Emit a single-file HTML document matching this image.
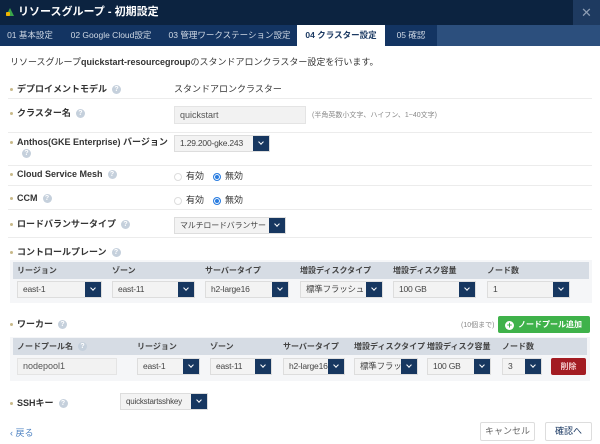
<!DOCTYPE html><html><head><meta charset="utf-8"><style>
*{box-sizing:border-box;margin:0;padding:0}
body{width:600px;height:444px;background:#fff;font-family:"Liberation Sans","Noto Sans CJK JP",sans-serif;font-size:9px;color:#333;position:relative;overflow:hidden}
.a{position:absolute;white-space:nowrap}
.title{left:0;top:0;width:600px;height:25px;background:#0c2340}
.tabs{left:0;top:25px;width:600px;height:21px;background:#2c4f7d}
.tab{position:absolute;top:0;height:21px;line-height:21px;color:#cfd8e4;font-size:8.5px;background:#133462;text-align:center}
.lbl{font-weight:bold;font-size:9px;color:#333}
.lbl:before{content:"";display:inline-block;width:3px;height:3px;border-radius:50%;background:#c8b98a;margin-right:4px;vertical-align:middle}
.q{display:inline-block;width:9px;height:9px;border-radius:50%;background:#c5d0dc;color:#fff;font-size:7px;line-height:9px;text-align:center;font-weight:bold;vertical-align:middle;margin-left:5px}
.sep{left:8px;width:584px;height:1px;background:#ececec}
.sel{position:absolute;height:17px;background:#f3f3f3;border:1px solid #ddd;line-height:15px;padding-left:5px;font-size:8.5px;color:#444;overflow:hidden;letter-spacing:-0.2px}
.sel i{position:absolute;right:-1px;top:-1px;width:17px;height:17px;background:#173760}
.sel i:after{content:"";position:absolute;left:6px;top:5px;width:3px;height:3px;border-right:1px solid #fff;border-bottom:1px solid #fff;transform:rotate(45deg)}
.box{background:#f5f6f8}
.hd{background:#d6dce4;height:17px}
.th{position:absolute;font-weight:bold;font-size:8px;color:#444;top:0;line-height:17px}
.btn{position:absolute;border:1px solid #ddd;background:#fff;text-align:center;color:#666;font-size:9px;line-height:17px;border-radius:2px}
.radio{display:inline-block;width:8px;height:8px;border-radius:50%;border:1px solid #ddd;vertical-align:middle;margin-right:4px}
.on{background:#2b7de0;border-color:#2b7de0;box-shadow:inset 0 0 0 1px #fff}
</style></head><body>
<div class="a title"></div>
<div class="a" style="left:6px;top:8px;width:0;height:0;border-left:4px solid transparent;border-right:4px solid transparent;border-bottom:8px solid #3aa64a"></div>
<div class="a" style="left:6px;top:12px;width:4px;height:4px;background:#f0b400;border-radius:1px"></div>
<div class="a" style="left:18px;top:5px;color:#fff;font-size:11px;font-weight:bold;line-height:14px">リソースグループ - 初期設定</div>
<div class="a" style="left:573px;top:0;width:27px;height:25px;background:#1e3a60;color:#8d9db3;font-size:13px;text-align:center;line-height:25px">✕</div>
<div class="a tabs"></div>
<div class="a" style="left:0;top:25px;width:437px;height:21px">
<div class="tab" style="left:0;width:60px">01 基本設定</div>
<div class="tab" style="left:60px;width:102px">02 Google Cloud設定</div>
<div class="tab" style="left:162px;width:135px">03 管理ワークステーション設定</div>
<div class="tab" style="left:297px;width:88px;background:#fff;color:#1c3a63;font-weight:bold">04 クラスター設定</div>
<div class="tab" style="left:385px;width:52px">05 確認</div>
</div>
<div class="a" style="left:10px;top:55px;font-size:9px">リソースグループ<b>quickstart-resourcegroup</b>のスタンドアロンクラスター設定を行います。</div>

<div class="a lbl" style="left:10px;top:82px">デプロイメントモデル<span class="q">?</span></div>
<div class="a" style="left:174px;top:82px">スタンドアロンクラスター</div>
<div class="a sep" style="top:98px"></div>
<div class="a lbl" style="left:10px;top:106px">クラスター名<span class="q">?</span></div>
<div class="a" style="left:174px;top:106px;width:132px;height:18px;background:#f2f2f2;border:1px solid #e4e4e4;padding-left:5px;line-height:16px;color:#555">quickstart</div>
<div class="a" style="left:312px;top:110px;font-size:7px;color:#888">(半角英数小文字、ハイフン、1~40文字)</div>
<div class="a sep" style="top:132px"></div>
<div class="a lbl" style="left:10px;top:135px">Anthos(GKE Enterprise) バージョン</div>
<div class="a" style="left:22px;top:148px"><span class="q" style="margin:0">?</span></div>
<div class="sel" style="left:174px;top:135px;width:96px">1.29.200-gke.243<i></i></div>
<div class="a sep" style="top:165px"></div>
<div class="a lbl" style="left:10px;top:169px">Cloud Service Mesh<span class="q">?</span></div>
<div class="a" style="left:174px;top:169px"><span class="radio"></span>有効　<span class="radio on"></span>無効</div>
<div class="a sep" style="top:185px"></div>
<div class="a lbl" style="left:10px;top:193px">CCM<span class="q">?</span></div>
<div class="a" style="left:174px;top:193px"><span class="radio"></span>有効　<span class="radio on"></span>無効</div>
<div class="a sep" style="top:209px"></div>
<div class="a lbl" style="left:10px;top:217px">ロードバランサータイプ<span class="q">?</span></div>
<div class="sel" style="left:174px;top:217px;width:112px;font-size:8px">マルチロードバランサー<i></i></div>
<div class="a sep" style="top:237px"></div>

<div class="a lbl" style="left:10px;top:245px">コントロールプレーン<span class="q">?</span></div>
<div class="a box" style="left:10px;top:260px;width:582px;height:43px"></div>
<div class="a hd" style="left:13px;top:262px;width:576px"></div>
<div class="a" style="left:0;top:262px;width:600px;height:17px">
<div class="th" style="left:17px">リージョン</div><div class="th" style="left:112px">ゾーン</div><div class="th" style="left:205px">サーバータイプ</div><div class="th" style="left:300px">増設ディスクタイプ</div><div class="th" style="left:393px">増設ディスク容量</div><div class="th" style="left:487px">ノード数</div>
</div>
<div class="sel" style="left:17px;top:281px;width:85px">east-1<i></i></div>
<div class="sel" style="left:112px;top:281px;width:83px">east-11<i></i></div>
<div class="sel" style="left:205px;top:281px;width:84px">h2-large16<i></i></div>
<div class="sel" style="left:300px;top:281px;width:83px">標準フラッシュト<i></i></div>
<div class="sel" style="left:393px;top:281px;width:83px">100 GB<i></i></div>
<div class="sel" style="left:487px;top:281px;width:83px">1<i></i></div>

<div class="a lbl" style="left:10px;top:317px">ワーカー<span class="q">?</span></div>
<div class="a" style="left:461px;top:320px;font-size:7px;color:#888">(10個まで)</div>
<div class="a" style="left:498px;top:316px;width:92px;height:17px;background:#3fb24a;border-radius:2px;color:#fff;font-weight:bold;font-size:8px;line-height:17px;padding-left:7px"><span style="display:inline-block;width:9px;height:9px;border-radius:50%;background:#fff;color:#3fb24a;font-size:9px;line-height:9px;text-align:center;vertical-align:-1px;margin-right:4px">+</span>ノードプール追加</div>
<div class="a box" style="left:10px;top:337px;width:580px;height:44px"></div>
<div class="a hd" style="left:13px;top:338px;width:574px"></div>
<div class="a" style="left:0;top:338px;width:600px;height:17px">
<div class="th" style="left:17px">ノードプール名<span class="q">?</span></div><div class="th" style="left:137px">リージョン</div><div class="th" style="left:210px">ゾーン</div><div class="th" style="left:283px">サーバータイプ</div><div class="th" style="left:354px">増設ディスクタイプ</div><div class="th" style="left:427px">増設ディスク容量</div><div class="th" style="left:502px">ノード数</div>
</div>
<div class="a" style="left:17px;top:358px;width:100px;height:17px;background:#f2f2f2;border:1px solid #e4e4e4;padding-left:5px;line-height:15px;color:#555">nodepool1</div>
<div class="sel" style="left:137px;top:358px;width:63px">east-1<i></i></div>
<div class="sel" style="left:210px;top:358px;width:62px">east-11<i></i></div>
<div class="sel" style="left:283px;top:358px;width:62px">h2-large16<i></i></div>
<div class="sel" style="left:354px;top:358px;width:64px">標準フラッシ<i></i></div>
<div class="sel" style="left:427px;top:358px;width:64px">100 GB<i></i></div>
<div class="sel" style="left:502px;top:358px;width:40px">3<i></i></div>
<div class="a" style="left:551px;top:358px;width:35px;height:17px;background:#a31c22;border-radius:2px;color:#f2c8c8;font-weight:bold;font-size:8px;line-height:17px;text-align:center">削除</div>

<div class="a lbl" style="left:10px;top:396px">SSHキー<span class="q">?</span></div>
<div class="sel" style="left:120px;top:393px;width:88px;font-size:8px">quickstartsshkey<i></i></div>

<div class="a" style="left:10px;top:426px;color:#4a7fc0;font-size:9px">‹ 戻る</div>
<div class="btn" style="left:480px;top:422px;width:55px;height:19px">キャンセル</div>
<div class="btn" style="left:545px;top:422px;width:47px;height:19px;color:#1c3a63">確認へ</div>
</body></html>
